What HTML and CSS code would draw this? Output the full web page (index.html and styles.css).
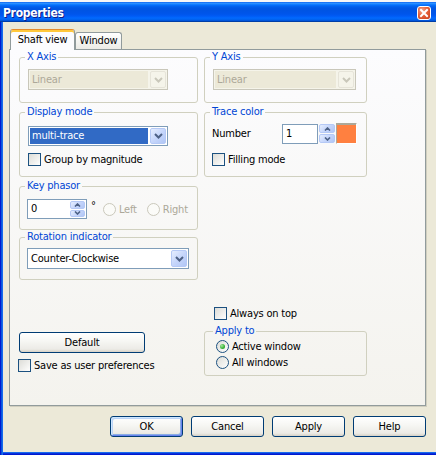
FILE: index.html
```html
<!DOCTYPE html>
<html>
<head>
<meta charset="utf-8">
<title>Properties</title>
<link rel="stylesheet" href="styles.css">
</head>
<body>
<div class="topstrip"></div>
<div class="window">
  <div class="titlebar">
    <span class="title">Properties</span>
    <span class="close"><svg width="10" height="10" viewBox="0 0 10 10"><path d="M2 2 L8 8 M8 2 L2 8" stroke="#fff" stroke-width="2" stroke-linecap="square"/></svg></span>
  </div>
  <div class="frame">
    <div class="tabs">
      <div class="tab active">Shaft view</div>
      <div class="tab t-win">Window</div>
    </div>
    <div class="page">
      <div class="col">
        <fieldset class="grp g-axis">
          <legend>X Axis</legend>
          <div class="combo disabled w-x"><span class="val">Linear</span><span class="drop"><svg width="9" height="6" viewBox="0 0 9 6"><path d="M1 1 L4.5 4.5 L8 1" fill="none" stroke="currentColor" stroke-width="2"/></svg></span></div>
        </fieldset>
        <fieldset class="grp g-mode">
          <legend>Display mode</legend>
          <div class="combo focus w-x h20"><span class="val">multi-trace</span><span class="drop"><svg width="9" height="6" viewBox="0 0 9 6"><path d="M1 1 L4.5 4.5 L8 1" fill="none" stroke="currentColor" stroke-width="2"/></svg></span></div>
          <div class="chk c-mode"><span class="box"></span><span>Group by magnitude</span></div>
        </fieldset>
        <fieldset class="grp g-key">
          <legend>Key phasor</legend>
          <div class="keyrow">
            <div class="edit e-key"><span class="etext">0</span><span class="spin in"><span class="sb"><svg width="7" height="4" viewBox="0 0 7 4"><path d="M1 3.5 L3.5 1 L6 3.5" fill="none" stroke="currentColor" stroke-width="1.6"/></svg></span><span class="sb"><svg width="7" height="4" viewBox="0 0 7 4"><path d="M1 0.5 L3.5 3 L6 0.5" fill="none" stroke="currentColor" stroke-width="1.6"/></svg></span></span></div>
            <span class="deg">°</span>
            <span class="ropt dis"><span class="radio"></span><span>Left</span></span>
            <span class="ropt dis"><span class="radio"></span><span>Right</span></span>
          </div>
        </fieldset>
        <fieldset class="grp g-rot">
          <legend>Rotation indicator</legend>
          <div class="combo w-rot"><span class="val">Counter-Clockwise</span><span class="drop"><svg width="9" height="6" viewBox="0 0 9 6"><path d="M1 1 L4.5 4.5 L8 1" fill="none" stroke="currentColor" stroke-width="2"/></svg></span></div>
        </fieldset>
        <div class="btn b-default">Default</div>
        <div class="chk c-save"><span class="box"></span><span>Save as user preferences</span></div>
      </div>
      <div class="col">
        <fieldset class="grp g-axis">
          <legend>Y Axis</legend>
          <div class="combo disabled w-y"><span class="val">Linear</span><span class="drop"><svg width="9" height="6" viewBox="0 0 9 6"><path d="M1 1 L4.5 4.5 L8 1" fill="none" stroke="currentColor" stroke-width="2"/></svg></span></div>
        </fieldset>
        <fieldset class="grp g-trace">
          <legend>Trace color</legend>
          <div class="numrow">
            <span class="lbl">Number</span>
            <div class="edit e-num"><span class="etext">1</span></div>
            <span class="spin ext"><span class="sb"><svg width="7" height="4" viewBox="0 0 7 4"><path d="M1 3.5 L3.5 1 L6 3.5" fill="none" stroke="currentColor" stroke-width="1.6"/></svg></span><span class="sb"><svg width="7" height="4" viewBox="0 0 7 4"><path d="M1 0.5 L3.5 3 L6 0.5" fill="none" stroke="currentColor" stroke-width="1.6"/></svg></span></span>
            <span class="swatch"></span>
          </div>
          <div class="chk c-fill"><span class="box"></span><span>Filling mode</span></div>
        </fieldset>
        <div class="chk c-top"><span class="box"></span><span>Always on top</span></div>
        <fieldset class="grp g-apply">
          <legend>Apply to</legend>
          <div class="ropt"><span class="radio on"></span><span>Active window</span></div>
          <div class="ropt r2"><span class="radio"></span><span>All windows</span></div>
        </fieldset>
      </div>
    </div>
    <div class="actions">
      <div class="btn b-act default">OK</div>
      <div class="btn b-act">Cancel</div>
      <div class="btn b-act">Apply</div>
      <div class="btn b-act">Help</div>
    </div>
  </div>
</div>
</body>
</html>
```
FILE: styles.css
```css
* { box-sizing: border-box; }
html, body { margin: 0; padding: 0; }
body {
  width: 436px;
  height: 455px;
  overflow: hidden;
  background: #FFFFFF;
  font-family: "DejaVu Sans Condensed", "Liberation Sans", Arial, sans-serif;
  font-size: 11px;
  letter-spacing: -0.2px;
  color: #000;
}
.topstrip { height: 2px; background: #F6F6F6; }
.window { height: 453px; display: flex; flex-direction: column; }

.titlebar {
  height: 20px;
  flex: none;
  display: flex;
  align-items: center;
  justify-content: space-between;
  padding: 0 5px 0 3px;
  color: #fff;
  font-family: "DejaVu Sans Condensed", "Liberation Sans", Arial, sans-serif;
  font-weight: bold;
  font-size: 12px;
  letter-spacing: -0.3px;
  text-shadow: 1px 1px 0 #0F1C8A;
  background: linear-gradient(to bottom, #0058EE 0%, #3593FF 5%, #288EFF 8%, #127DFF 12%, #036FFC 16%, #0262EE 22%, #0057E5 30%, #0054E3 40%, #0055EB 60%, #005BF5 70%, #026AFE 80%, #0062EF 88%, #0052D6 94%, #0040AB 97%, #003092 100%);
}
.title { padding-top: 1px; }
.close {
  width: 14px;
  height: 14px;
  margin-top: 2px;
  border: 1px solid #fff;
  border-radius: 3px;
  display: flex;
  align-items: center;
  justify-content: center;
  background: radial-gradient(circle at 35% 30%, #F6A78C 0%, #E5603A 45%, #C93B17 100%);
}

.frame {
  flex: 1;
  display: flex;
  flex-direction: column;
  background: #ECE9D8;
  padding: 7px 10px 3px 9px;
  box-shadow: inset 1px 0 #0019CF, inset 2px 0 #0855DD, inset 3px 0 #166AEE,
              inset 0 -1px #0019CF, inset 0 -2px #0831D9, inset 0 -3px #166AEE;
}

.tabs {
  display: flex;
  align-items: flex-end;
  height: 20px;
  margin-left: 1px;
  position: relative;
  z-index: 1;
}
.tab {
  height: 17px;
  border: 1px solid #919B9C;
  border-bottom: none;
  border-radius: 3px 3px 0 0;
  background: linear-gradient(#FFFFFF, #F3F3EF 60%, #ECEBE6);
  line-height: 15px;
  text-align: center;
}
.t-win { width: 47px; }
.tab.active {
  width: 65px;
  height: 21px;
  margin-bottom: -1px;
  background: #FCFCFE;
  border-top: 1px solid #E68B2C;
  box-shadow: inset 0 2px 0 #FFC83C;
  padding-top: 2px;
  line-height: 16px;
}

.page {
  height: 357px;
  flex: none;
  border: 1px solid #919B9C;
  background: linear-gradient(#FCFCFE, #F4F3EE);
  box-shadow: 1px 1px 0 #D0CEBF;
  display: grid;
  grid-template-columns: 179px 163px;
  column-gap: 6px;
  padding-left: 9px;
  align-items: start;
}
.col { display: flex; flex-direction: column; }

.grp {
  margin: 0;
  border: 1px solid #D0D0BF;
  border-radius: 3px;
  padding: 0 8px;
  min-width: 0;
}
.grp legend {
  padding: 0 2px;
  margin-left: -3px;
  color: #0046D5;
  line-height: 12px;
  font-size: 11px;
}
.g-axis { margin-top: 1px; height: 52px; padding-top: 6px; }
.g-mode { margin-top: 3px; height: 71px; padding-top: 8px; }
.g-trace { margin-top: 3px; height: 71px; padding-top: 5px; }
.g-key { margin-top: 3px; height: 50px; padding-top: 7px; }
.g-rot { margin-top: 1px; height: 49px; padding-top: 5px; }
.g-apply { margin-top: 5px; height: 51px; padding: 3px 8px 0 11px; }

.combo {
  display: flex;
  height: 21px;
  border: 1px solid #7F9DB9;
  background: #fff;
  padding: 1px;
}
.combo.h20 { height: 20px; }
.w-x { width: 140px; }
.w-y { width: 143px; }
.w-rot { width: 162px; margin-left: -1px; }
.combo .val {
  flex: 1;
  line-height: 17px;
  padding-left: 2px;
  white-space: nowrap;
}
.combo.h20 .val { line-height: 16px; }
.combo .drop {
  width: 16px;
  flex: none;
  margin-left: 2px;
  display: flex;
  align-items: center;
  justify-content: center;
  border: 1px solid #B5C9F6;
  border-radius: 2px;
  background: linear-gradient(135deg, #E6EEFE 0%, #C6D6FB 50%, #B1C6F5 100%);
  color: #4D6185;
}
.combo.disabled { border-color: #C9C7BA; background: #F5F4EA; }
.combo.disabled .val { background: #ECE9D8; color: #ACA899; }
.combo.disabled .drop { background: #F5F4EA; border-color: #E6E4D9; color: #C9C7BA; }
.combo.focus .val { background: #316AC5; color: #fff; }

.chk { display: flex; align-items: center; height: 13px; line-height: 13px; white-space: nowrap; }
.box {
  width: 13px;
  height: 13px;
  flex: none;
  margin-right: 3px;
  border: 1px solid #1C5180;
  background: linear-gradient(135deg, #DCDCD7 0%, #F4F4F2 70%, #FFFFFF 100%);
}
.c-mode { margin-top: 7px; }
.c-fill { margin-top: 9px; margin-left: -1px; }
.c-top { margin-top: 130px; margin-left: 10px; }
.c-save { margin-top: 6px; margin-left: -1px; }

.ropt { display: flex; align-items: center; height: 13px; line-height: 13px; white-space: nowrap; }
.ropt.r2 { margin-top: 3px; }
.radio {
  width: 13px;
  height: 13px;
  flex: none;
  margin-right: 3px;
  border-radius: 50%;
  border: 1px solid #1C5180;
  background: linear-gradient(135deg, #DCDCD7 0%, #F4F4F2 70%, #FFFFFF 100%);
  display: flex;
  align-items: center;
  justify-content: center;
}
.radio.on::after {
  content: "";
  width: 5px;
  height: 5px;
  border-radius: 50%;
  background: radial-gradient(circle at 35% 35%, #A8E89E 0%, #3DB53D 55%, #1A8F1A 100%);
}
.ropt.dis { color: #ACA899; }
.ropt.dis .radio { border-color: #CAC8BB; background: #FBFBF8; }

.edit {
  height: 20px;
  border: 1px solid #7F9DB9;
  background: #fff;
  display: flex;
  line-height: 18px;
}
.etext { flex: 1; padding-left: 3px; }
.e-num { width: 36px; }
.e-key { width: 60px; margin-left: -1px; }

.spin { display: flex; flex-direction: column; gap: 1px; }
.spin.in { width: 15px; margin: 1px; }
.spin.ext { width: 16px; height: 19px; margin-left: 1px; }
.sb {
  flex: 1;
  display: flex;
  align-items: center;
  justify-content: center;
  border: 1px solid #B5C9F6;
  border-radius: 2px;
  background: linear-gradient(135deg, #E6EEFE 0%, #C6D6FB 50%, #B1C6F5 100%);
  color: #4D6185;
}

.keyrow { display: flex; align-items: center; height: 20px; }
.deg { width: 12px; margin-left: 4px; align-self: flex-start; line-height: 13px; }
.keyrow .ropt + .ropt { margin-left: 10px; }

.numrow { display: flex; align-items: center; height: 21px; }
.lbl { width: 70px; margin-left: -1px; }
.swatch {
  width: 21px;
  height: 21px;
  margin-left: 1px;
  background: #FF8040;
  border: 1px solid;
  border-color: #ACA899 #FFFFFF #FFFFFF #ACA899;
  box-shadow: inset 0 1px 0 #ACA899;
}

.btn {
  height: 21px;
  border: 1px solid #003C74;
  border-radius: 3px;
  background: linear-gradient(#FFFFFF 0%, #F7F7F4 40%, #ECEBE6 85%, #D6D0C5 100%);
  display: flex;
  align-items: center;
  justify-content: center;
}
.b-default { width: 126px; margin-top: 52px; }
.btn.default {
  box-shadow: inset 1px 1px 0 #CEE7FF, inset -1px -1px 0 #6982EE, inset 2px 2px 0 #BCD4F6, inset -2px -2px 0 #89ADE4;
}
.actions { display: flex; justify-content: flex-end; gap: 8px; margin-top: 10px; }
.b-act { width: 73px; }
```
